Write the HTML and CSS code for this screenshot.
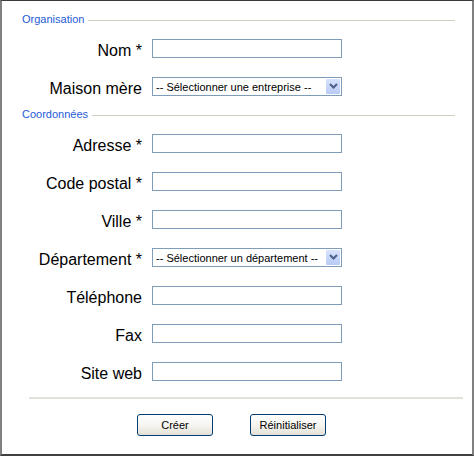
FILE: index.html
```html
<!DOCTYPE html>
<html lang="fr">
<head>
<meta charset="utf-8">
<title>Organisation</title>
<link rel="stylesheet" href="styles.css">
</head>
<body>
<div class="frame">
  <div class="legend"><span class="legend-text">Organisation</span><span class="legend-line"></span></div>
  <div class="row"><label class="label">Nom *</label><input class="field" type="text"></div>
  <div class="row"><label class="label">Maison mère</label>
    <div class="select"><select class="select-box"><option>-- Sélectionner une entreprise --</option></select><span class="select-arrow"><svg width="9" height="6" viewBox="0 0 9 6"><path d="M1 1 L4.5 4.5 L8 1" fill="none" stroke="#4a5f8a" stroke-width="2"/></svg></span></div>
  </div>
  <div class="legend legend-second"><span class="legend-text">Coordonnées</span><span class="legend-line"></span></div>
  <div class="row"><label class="label">Adresse *</label><input class="field" type="text"></div>
  <div class="row"><label class="label">Code postal *</label><input class="field" type="text"></div>
  <div class="row"><label class="label">Ville *</label><input class="field" type="text"></div>
  <div class="row"><label class="label">Département *</label>
    <div class="select"><select class="select-box"><option>-- Sélectionner un département --</option></select><span class="select-arrow"><svg width="9" height="6" viewBox="0 0 9 6"><path d="M1 1 L4.5 4.5 L8 1" fill="none" stroke="#4a5f8a" stroke-width="2"/></svg></span></div>
  </div>
  <div class="row"><label class="label">Téléphone</label><input class="field" type="text"></div>
  <div class="row"><label class="label">Fax</label><input class="field" type="text"></div>
  <div class="row"><label class="label">Site web</label><input class="field" type="text"></div>
  <div class="separator"></div>
  <div class="actions">
    <button class="btn" type="button">Créer</button>
    <button class="btn" type="button">Réinitialiser</button>
  </div>
</div>
</body>
</html>
```
FILE: styles.css
```css
html, body {
  margin: 0;
  padding: 0;
  background: #ffffff;
}
.frame {
  box-sizing: border-box;
  width: 474px;
  height: 456px;
  border-top: 1px solid #3a3a3a;
  border-left: 2px solid #808080;
  border-right: 2px solid #808080;
  border-bottom: 2px solid #404040;
  padding-top: 10px;
  font-family: "Liberation Sans", Arial, sans-serif;
  color: #000;
  display: flex;
  flex-direction: column;
}
.legend {
  display: flex;
  align-items: center;
  height: 16px;
  padding: 0 17px 0 20px;
  margin-bottom: 2px;
}
.legend-second {
  margin-top: 1px;
}
.legend-text {
  font-size: 11px;
  line-height: 16px;
  color: #1f5bd6;
  white-space: nowrap;
}
.legend-line {
  flex: 1;
  height: 1px;
  margin-left: 4px;
  margin-top: 2px;
  background: #d0d0bf;
}
.row {
  display: grid;
  grid-template-columns: 140px 190px;
  column-gap: 10px;
  align-items: center;
  height: 38px;
}
.label {
  text-align: right;
  font-size: 16px;
  line-height: 18px;
  padding-top: 5px;
  white-space: nowrap;
}
.field {
  box-sizing: border-box;
  width: 190px;
  height: 19px;
  margin: 0;
  padding: 0 3px;
  border: 1px solid #7f9db9;
  background: #fff;
  font-family: "Liberation Sans", Arial, sans-serif;
  font-size: 11px;
}
.select {
  position: relative;
  width: 190px;
  height: 19px;
}
.select-box {
  box-sizing: border-box;
  width: 190px;
  height: 19px;
  margin: 0;
  padding: 0 0 0 3px;
  border: 1px solid #7f9db9;
  border-radius: 0;
  background: #fff;
  appearance: none;
  -webkit-appearance: none;
  font-family: "Liberation Sans", Arial, sans-serif;
  font-size: 11px;
  color: #000;
}
.select-arrow {
  position: absolute;
  top: 2px;
  right: 2px;
  width: 14px;
  height: 15px;
  box-sizing: border-box;
  background: linear-gradient(#d7e3fd, #b9cbf5);
  border-radius: 1px;
  display: flex;
  align-items: center;
  justify-content: center;
  pointer-events: none;
}
.separator {
  margin: 7px 0 0 27px;
  width: 434px;
  height: 2px;
  background: #e4e2d8;
}
.actions {
  display: flex;
  gap: 37px;
  margin: 15px 0 0 135px;
}
.btn {
  box-sizing: border-box;
  width: 76px;
  height: 22px;
  margin: 0;
  padding: 0;
  border: 1px solid #003c74;
  border-radius: 3px;
  background: linear-gradient(#ffffff 0%, #f6f5f0 50%, #e3e1d6 100%);
  font-family: "Liberation Sans", Arial, sans-serif;
  font-size: 11px;
  color: #000;
}
```
